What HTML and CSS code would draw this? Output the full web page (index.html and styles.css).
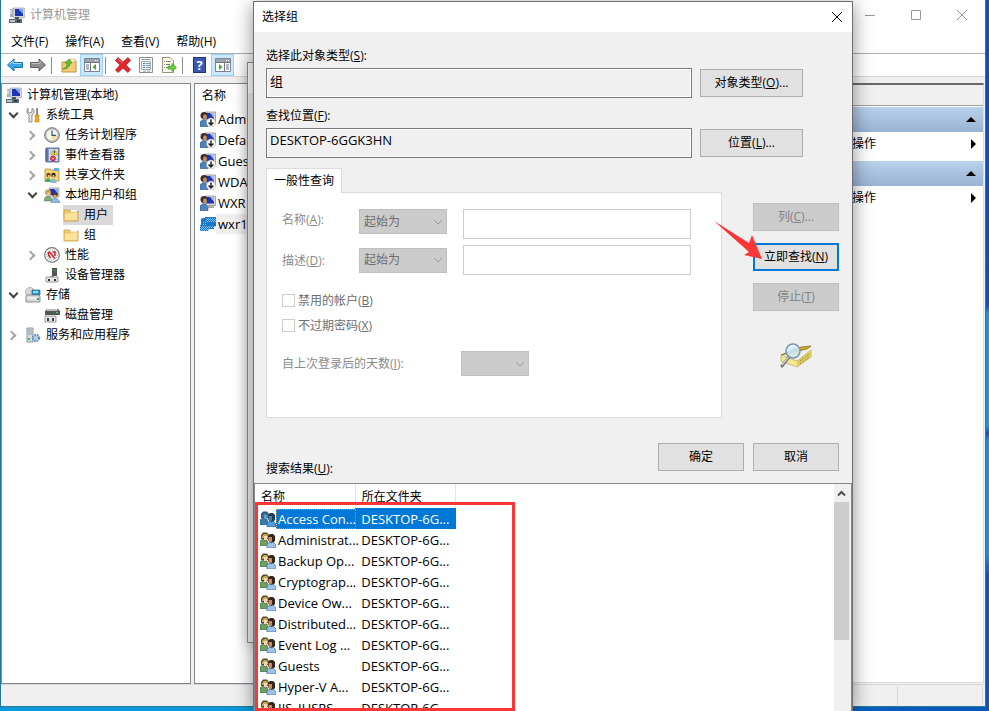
FILE: index.html
```html
<!DOCTYPE html>
<html lang="zh-CN">
<head>
    <meta charset="UTF-8">
    <meta name="viewport" content="width=device-width, initial-scale=1.0">
    <title>计算机管理</title>
    <link rel="stylesheet" href="styles.css">
</head>
<body>

<!-- Shared icons -->
<svg class="sprite" aria-hidden="true">
    <symbol id="i-computer" viewBox="0 0 16 16">
        <path d="M4 1h11l1 1v8l-2 1H5L4 10z" fill="#d5d8de" stroke="#8b8f98" stroke-width=".6"/>
        <path d="M6 2h8v7H6z" fill="#1c35b5"/><path d="M10 2h4v5L10 3z" fill="#7fa4f2"/>
        <path d="M1 2h3v8H1z" fill="#a9afb8"/><path d="M1 4h2M1 6h2" stroke="#fff"/>
        <path d="M0 12h13v4H0z" fill="#5d6b76"/><path d="M1 13h5v2H1z" fill="#b8c4cc"/><path d="M8 13h3v2H8z" fill="#2f3d46"/>
        <path d="M6 10h4v2H6z" fill="#4b5560"/>
    </symbol>
    <symbol id="i-tools" viewBox="0 0 16 16">
        <path d="M3 1v4l2 1 2-1V1l2 2v3L7 8v7H4V8L2 6V3z" fill="#e3e3e3" stroke="#7b7b7b" stroke-width=".8"/>
        <path d="M11 1h2v7h-2z" fill="#8d8d8d"/><path d="M10 8h4v2l-1 1 1 1v3h-4v-3l1-1-1-1z" fill="#f0a91c" stroke="#c47a08" stroke-width=".6"/>
    </symbol>
    <symbol id="i-clock" viewBox="0 0 16 16">
        <circle cx="8" cy="8" r="7.4" fill="#b9b9b9" stroke="#6f6f6f" stroke-width=".8"/>
        <circle cx="8" cy="8" r="5.6" fill="#f7f4e8"/><path d="M8 8h5A5.4 5.4 0 0 1 8 13.4z" fill="#f3dda7"/>
        <path d="M8 3.5V8.3h4" fill="none" stroke="#26507d" stroke-width="1.2"/>
    </symbol>
    <symbol id="i-book" viewBox="0 0 16 16">
        <path d="M2 1h13v14H2z" fill="#7f9fd3" stroke="#40588a" stroke-width=".8"/><path d="M5 2h9v12H5z" fill="#d3e0f4"/>
        <path d="M1 3h3M1 5h3M1 7h3M1 9h3M1 11h3M1 13h3" stroke="#3f4550" stroke-width=".8"/>
        <path d="M6 4h4M6 6h2M6 12h2M12 12h2" stroke="#8aa3cf" stroke-width=".7"/>
        <path d="M10.500 2l3.500 6H7z" fill="#f8d42c" stroke="#b18a00" stroke-width=".5"/><path d="M10.500 4v2M10.500 6.800v.6" stroke="#222"/>
        <circle cx="9" cy="11.500" r="2.800" fill="#d8232b"/><path d="M8 10.500l2 2m0-2l-2 2" stroke="#fff" stroke-width=".8"/>
    </symbol>
    <symbol id="i-folder" viewBox="0 0 16 16">
        <path d="M1 3h5l1 1h8v10H1z" fill="#f1cf73" stroke="#c99b3b" stroke-width=".8"/>
        <path d="M8 3h6v4H8z" fill="#fff"/><path d="M1.500 6H8l1-1h5.500v8.500h-13z" fill="#fbe29a" stroke="#dcb355" stroke-width=".6"/>
    </symbol>
    <symbol id="i-share" viewBox="0 0 16 16">
        <path d="M1 2h5l1 1h8v11H1z" fill="#f5d572" stroke="#b98c32" stroke-width=".8"/><path d="M10 1h5v3h-5z" fill="#6ea9dc"/>
        <circle cx="4.500" cy="8" r="2.200" fill="#7a4b22"/><circle cx="9.500" cy="8" r="2.200" fill="#2b2b2b"/>
        <path d="M4 8h1.800v2H4zM8.500 8h1.800v2H8.500z" fill="#e4b184"/>
        <path d="M1 15c0-5 6-5 6 0z" fill="#4aa86b"/><path d="M6.500 16c0-6 6-6 6 0z" fill="#82b9dd"/>
    </symbol>
    <symbol id="i-users" viewBox="0 0 16 16">
        <path d="M5 1h10v9H5z" fill="#d3d7e0" stroke="#888" stroke-width=".6"/><path d="M6 2h8v6H6z" fill="#1b34b4"/><path d="M10 2h4v5z" fill="#88a8f0"/>
        <circle cx="4" cy="5.500" r="3" fill="#c8a04b"/><circle cx="4.500" cy="7" r="1.700" fill="#f2c79c"/>
        <circle cx="11" cy="8" r="2.500" fill="#5b3a21"/><circle cx="11" cy="9.300" r="1.600" fill="#e0a878"/>
        <path d="M0 14c0-7 8-6 8 0z" fill="#7fae77" stroke="#4a7a48" stroke-width=".5"/><path d="M7 16c0-7 8-6 9 0z" fill="#8db9e4" stroke="#4e7cae" stroke-width=".5"/>
    </symbol>
    <symbol id="i-perf" viewBox="0 0 16 16">
        <circle cx="8" cy="8" r="7.300" fill="#fff" stroke="#777" stroke-width="1.200"/><circle cx="8" cy="8" r="5.200" fill="#f5f5f5" stroke="#777" stroke-width=".7" stroke-dasharray="1 1"/>
        <path d="M4.500 5v3l2 3M5 4.500l6 7M8.500 5H11v4" fill="none" stroke="#cf1f24" stroke-width="1.500"/>
    </symbol>
    <symbol id="i-device" viewBox="0 0 16 16">
        <path d="M8 1h5v8H8z" fill="#555"/><path d="M10 3h1v1h-1z" fill="#4ce04c"/><path d="M6 9h4v2H6z" fill="#888"/>
        <path d="M2 10h12v5H2z" fill="#e4e4e4" stroke="#888" stroke-width=".8"/><path d="M4 12h2v2H4zM10 12h2v2h-2z" fill="#333"/>
    </symbol>
    <symbol id="i-storage" viewBox="0 0 16 16">
        <circle cx="5" cy="5" r="4.500" fill="#d8dde1" stroke="#999" stroke-width=".7"/><circle cx="5" cy="5" r="1.300" fill="#fff" stroke="#999" stroke-width=".5"/>
        <path d="M7 3h8v5H7z" fill="#2c97c9" stroke="#175e80" stroke-width=".6"/><path d="M8 4h5v2H8z" fill="#8edcf5"/>
        <path d="M1 9l1-1h12l1 1v6H1z" fill="#d6d9db" stroke="#777" stroke-width=".8"/><path d="M2 11h10" stroke="#fff"/><path d="M12 11h2v2h-2z" fill="#2fae3a"/>
    </symbol>
    <symbol id="i-disk" viewBox="0 0 16 16">
        <path d="M2 3l1-1h11l2 2v4H1V4z" fill="#555"/><path d="M3 2h10l1 2H2z" fill="#bbb"/><path d="M12 5h2v1h-2z" fill="#4ce04c"/>
        <path d="M1 9h11v6H1z" fill="#e4e4e4" stroke="#888" stroke-width=".8"/><path d="M3 11h2v3H3zM8 11h2v3H8z" fill="#444"/>
    </symbol>
    <symbol id="i-services" viewBox="0 0 16 16">
        <path d="M2 1h6v14H2z" fill="#d8dde2" stroke="#77808a" stroke-width=".8"/><path d="M3 3h4M3 5h4M3 7h4" stroke="#7f8b98" stroke-width=".8"/><path d="M3 11h2v2H3z" fill="#37b54a"/>
        <circle cx="11" cy="11" r="3.200" fill="#c9dff2" stroke="#5b8ab8" stroke-width="2" stroke-dasharray="1.600 1"/><circle cx="11" cy="11" r="1.300" fill="#fff" stroke="#5b8ab8" stroke-width=".6"/>
    </symbol>
    <symbol id="i-user" viewBox="0 0 16 16">
        <path d="M5 1h10.500v9.500H5z" fill="#d5d8de" stroke="#888" stroke-width=".7"/><path d="M6 2h8v6.500H6z" fill="#1c35b5"/><path d="M10 2h4v5z" fill="#9db9f5"/>
        <path d="M8 11h6v2H8z" fill="#aaa"/>
        <circle cx="4" cy="4.500" r="3.500" fill="#3b2e29"/><ellipse cx="5" cy="6" rx="2" ry="2.700" fill="#c68f63"/>
        <path d="M0 15.500V11l3-2.500 3 1 2 3v3z" fill="#4c82bd" stroke="#234f82" stroke-width=".6"/>
    </symbol>
    <symbol id="i-user-off" viewBox="0 0 16 16">
        <use href="#i-user"/>
        <circle cx="11" cy="11.500" r="4.500" fill="#fff" stroke="#999" stroke-width=".6"/><path d="M11 8.500v5M8.600 11.500l2.400 2.500 2.400-2.500" fill="none" stroke="#222" stroke-width="1.500"/>
    </symbol>
    <symbol id="i-user-sel" viewBox="0 0 16 16">
        <path d="M5 1h11v9l-2 1v2H9l-1 2H0v-5l1-2V3l2-1h2z" fill="#1977c8"/>
        <path d="M6 2.500h10M6 4.500h10M0 10.500h15M0 12.500h9M0 14.500h8" stroke="#73b8ee" stroke-dasharray="1 1"/>
        <path d="M7 3.500h9M7 5.500h9M1 11.500h13M1 13.500h7M3 6.500h4M3 8.500h4" stroke="#8cc6f2" stroke-dasharray="1 1"/>
    </symbol>
    <symbol id="i-group" viewBox="0 0 16 16">
        <path d="M1 7V3l2-2.500h4L9 3v4z" fill="#5a4a22"/><path d="M2 4l2-2h3l1 2v2H2z" fill="#c9ac58"/><path d="M4 4h3v4L5.500 9 4 8z" fill="#f5d6b5"/>
        <path d="M0 13.500V9l3-2 2 2 2-1 1 5.500z" fill="#6f9f63" stroke="#3d6638" stroke-width=".7"/>
        <path d="M8 8V4l2-2h3l2 2v5l-2 2h-3z" fill="#35261d"/><path d="M8.500 5H12v4l-1.500 2L8.500 9z" fill="#c58d64"/>
        <path d="M7 16v-4l3-2 1 1 2-1 3 3v3z" fill="#9dc3ea" stroke="#3c689a" stroke-width=".7"/>
    </symbol>
    <symbol id="i-group-sel" viewBox="0 0 16 16">
        <path d="M1 7V3l2-2.500h4L9 3v4z" fill="#235379"/><path d="M2 4l2-2h3l1 2v2H2z" fill="#3d729b"/><path d="M4 4h3v4L5.500 9 4 8z" fill="#6d9dc2"/>
        <path d="M0 13.500V9l3-2 2 2 2-1 1 5.500z" fill="#387ba6" stroke="#1b557f" stroke-width=".7"/>
        <path d="M8 8V4l2-2h3l2 2v5l-2 2h-3z" fill="#1b3d5e"/><path d="M8.500 5H12v4l-1.500 2L8.500 9z" fill="#527da1"/>
        <path d="M7 16v-4l3-2 1 1 2-1 3 3v3z" fill="#4c9bde" stroke="#1463a8" stroke-width=".7"/>
    </symbol>
    <symbol id="i-panel" viewBox="0 0 16 16">
        <path d="M.5 1.500h15v13H.5z" fill="#fff" stroke="#7b8490"/><path d="M1 2h14v3H1z" fill="#9aa3ae"/><path d="M1 5.500h14" stroke="#6c7580"/>
        <path d="M11 3.500h1M13 3.500h1" stroke="#fff"/>
    </symbol>
</svg>

<div class="desktop">
    <main class="window">
        <header class="titlebar">
            <svg class="icon"><use href="#i-computer"/></svg>
            <h1 class="window-title">计算机管理</h1>
            <button class="caption" aria-label="最小化"><svg viewBox="0 0 12 12"><path d="M1 6.500h10"/></svg></button>
            <button class="caption" aria-label="最大化"><svg viewBox="0 0 12 12"><path d="M1.500 1.500h9v9h-9z"/></svg></button>
            <button class="caption" aria-label="关闭"><svg viewBox="0 0 12 12"><path d="M1 1l10 10M11 1L1 11"/></svg></button>
        </header>

        <nav class="menubar">
            <button>文件(F)</button>
            <button>操作(A)</button>
            <button>查看(V)</button>
            <button>帮助(H)</button>
        </nav>

        <div class="toolbar">
            <button aria-label="后退"><svg class="icon" viewBox="0 0 16 16"><path d="M.5 8L7 2v3.500h8.500v5H7V14z" fill="#38a5e6" stroke="#1b6ea8"/><path d="M2.500 7.500L6 4v2.500h8.500" fill="none" stroke="#a4dcfa"/></svg></button>
            <button aria-label="前进"><svg class="icon" viewBox="0 0 16 16"><path d="M15.500 8L9 2v3.500H.5v5H9V14z" fill="#8f8f8f" stroke="#606060"/><path d="M1.500 6.500H10V4" fill="none" stroke="#c0c0c0"/></svg></button>
            <span class="separator"></span>
            <button aria-label="向上"><svg class="icon" viewBox="0 0 16 16"><path d="M1 5h5l1-1h8v11H1z" fill="#f0cd72" stroke="#bd9440"/><path d="M9 2h5v3H9z" fill="#fff4cf" stroke="#cfa851" stroke-width=".6"/><path d="M2 12c3-1 4-3 4-6H4l4-4 3 4H9c0 4-3 6-7 6z" fill="#5cc23c" stroke="#2f8a1c" stroke-width=".6"/></svg></button>
            <button class="pressed" aria-label="显示控制台树"><svg class="icon" viewBox="0 0 16 16"><use href="#i-panel"/><path d="M6.500 6v8M2 8h3M2 10h3M2 12h3" stroke="#6c7580"/><path d="M12 7v6L8.500 10z" fill="#39a935"/></svg></button>
            <span class="separator"></span>
            <button aria-label="删除"><svg class="icon" viewBox="0 0 16 16"><path d="M3 .5L8 5l5-4.500 2.500 3L11 8l4.500 4.500-2.500 3L8 11l-5 4.500L.5 13 5 8 .5 3.500z" fill="#e2262b" stroke="#a8151a" stroke-width=".7"/><path d="M3 2l4.500 4" stroke="#f58a8c"/></svg></button>
            <button aria-label="属性"><svg class="icon" viewBox="0 0 16 16"><path d="M1.500.5h13v15h-13z" fill="#fdfdfd" stroke="#8a8f96"/><path d="M3 2.500h10" stroke="#9ba2aa"/><path d="M3.500 4.500h9v8h-9z" fill="#eef3f8" stroke="#a5adb6"/><path d="M5 6.500h2M5 8.500h2M5 10.500h2" stroke="#2f8ad0"/><path d="M8 6.500h4M8 8.500h4M8 10.500h4M5 14h3M9 14h3" stroke="#8f98a1"/></svg></button>
            <button aria-label="导出列表"><svg class="icon" viewBox="0 0 16 16"><path d="M1.500.5H9L12.500 4v11.500h-11z" fill="#fffbea" stroke="#95907a"/><path d="M3 4.500h1M3 7.500h1M3 10.500h1M5 4.500h5M5 7.500h4M5 10.500h3" stroke="#77808a"/><path d="M7 9h4V6.500l4.500 4-4.500 4V12H7z" fill="#69cf46" stroke="#3d9a24" stroke-width=".7"/></svg></button>
            <span class="separator"></span>
            <button class="help" aria-label="帮助"><span>?</span></button>
            <button class="pressed" aria-label="显示操作窗格"><svg class="icon" viewBox="0 0 16 16"><use href="#i-panel"/><path d="M9.500 6v8M11 8h3M11 10h3M11 12h3" stroke="#6c7580"/><path d="M4 7v6l3.500-3z" fill="#39a935"/></svg></button>
        </div>

        <div class="panes">
            <section class="tree">
                <ul>
                    <li><a href="#" class="node"><svg class="icon"><use href="#i-computer"/></svg><span>计算机管理(本地)</span></a></li>
                    <li>
                        <a href="#" class="node"><i class="chevron open"></i><svg class="icon"><use href="#i-tools"/></svg><span>系统工具</span></a>
                        <ul>
                            <li><a href="#" class="node"><i class="chevron"></i><svg class="icon"><use href="#i-clock"/></svg><span>任务计划程序</span></a></li>
                            <li><a href="#" class="node"><i class="chevron"></i><svg class="icon"><use href="#i-book"/></svg><span>事件查看器</span></a></li>
                            <li><a href="#" class="node"><i class="chevron"></i><svg class="icon"><use href="#i-share"/></svg><span>共享文件夹</span></a></li>
                            <li>
                                <a href="#" class="node"><i class="chevron open"></i><svg class="icon"><use href="#i-users"/></svg><span>本地用户和组</span></a>
                                <ul>
                                    <li><a href="#" class="node leaf selected"><svg class="icon"><use href="#i-folder"/></svg><span>用户</span></a></li>
                                    <li><a href="#" class="node leaf"><svg class="icon"><use href="#i-folder"/></svg><span>组</span></a></li>
                                </ul>
                            </li>
                            <li><a href="#" class="node"><i class="chevron"></i><svg class="icon"><use href="#i-perf"/></svg><span>性能</span></a></li>
                            <li><a href="#" class="node leaf"><svg class="icon"><use href="#i-device"/></svg><span>设备管理器</span></a></li>
                        </ul>
                    </li>
                    <li>
                        <a href="#" class="node"><i class="chevron open"></i><svg class="icon"><use href="#i-storage"/></svg><span>存储</span></a>
                        <ul>
                            <li><a href="#" class="node leaf"><svg class="icon"><use href="#i-disk"/></svg><span>磁盘管理</span></a></li>
                        </ul>
                    </li>
                    <li><a href="#" class="node"><i class="chevron"></i><svg class="icon"><use href="#i-services"/></svg><span>服务和应用程序</span></a></li>
                </ul>
            </section>

            <section class="users">
                <table>
                    <thead><tr><th>名称</th></tr></thead>
                    <tbody>
                        <tr><td><svg class="icon"><use href="#i-user-off"/></svg><span>Admi</span></td></tr>
                        <tr><td><svg class="icon"><use href="#i-user-off"/></svg><span>Defau</span></td></tr>
                        <tr><td><svg class="icon"><use href="#i-user-off"/></svg><span>Guest</span></td></tr>
                        <tr><td><svg class="icon"><use href="#i-user-off"/></svg><span>WDA</span></td></tr>
                        <tr><td><svg class="icon"><use href="#i-user"/></svg><span>WXR</span></td></tr>
                        <tr class="selected"><td><svg class="icon"><use href="#i-user-sel"/></svg><span>wxr1</span></td></tr>
                    </tbody>
                </table>
            </section>

            <aside class="actions">
                <div class="actions-head"></div>
                <div class="actions-group"><i class="up"></i></div>
                <button class="actions-item">操作<i class="right"></i></button>
                <div class="actions-group"><i class="up"></i></div>
                <button class="actions-item">操作<i class="right"></i></button>
            </aside>
        </div>

        <footer class="statusbar"><span></span><span></span></footer>
    </main>

    <div class="back-dialog"></div>

    <div class="dialog" role="dialog" aria-labelledby="dialogTitle">
        <header class="dialog-title">
            <h2 id="dialogTitle">选择组</h2>
            <button class="close" aria-label="关闭"><svg viewBox="0 0 12 12"><path d="M1 1l10 10M11 1L1 11"/></svg></button>
        </header>

        <form class="dialog-form">
            <div class="scope">
                <label for="objectType">选择此对象类型(<u>S</u>):</label>
                <input type="text" id="objectType" value="组" readonly>
                <button type="button">对象类型(<u>O</u>)...</button>
                <label for="location" class="second">查找位置(<u>F</u>):</label>
                <input type="text" id="location" value="DESKTOP-6GGK3HN" readonly>
                <button type="button">位置(<u>L</u>)...</button>
            </div>

            <div class="query">
                <div class="tabs">
                    <button type="button" class="tab">一般性查询</button>
                    <div class="tab-panel">
                        <div class="filter">
                            <label for="nameText">名称(<u>A</u>):</label>
                            <select aria-label="名称条件" disabled><option>起始为</option></select>
                            <input type="text" id="nameText" disabled>
                        </div>
                        <div class="filter centered">
                            <label for="descText">描述(<u>D</u>):</label>
                            <select aria-label="描述条件" disabled><option>起始为</option></select>
                            <input type="text" id="descText" disabled>
                        </div>
                        <div class="checks">
                            <label><input type="checkbox" disabled>禁用的帐户(<u>B</u>)</label>
                            <label><input type="checkbox" disabled>不过期密码(<u>X</u>)</label>
                        </div>
                        <div class="days">
                            <label for="days">自上次登录后的天数(<u>I</u>):</label>
                            <select id="days" disabled><option></option></select>
                        </div>
                    </div>
                </div>
                <div class="side">
                    <button type="button" disabled>列(<u>C</u>)...</button>
                    <button type="button" class="default">立即查找(<u>N</u>)</button>
                    <button type="button" disabled>停止(<u>T</u>)</button>
                    <svg class="find-icon" viewBox="0 0 32 26">
                        <path d="M1 12L21 4l10-1-4 3z" fill="#d9a528" stroke="#7a6420" stroke-width=".7"/>
                        <path d="M1 12l16 6 14-11v7L17 24 1 18z" fill="#f3e98f" stroke="#b0a558" stroke-width=".7"/>
                        <path d="M17 18v6L31 14V7z" fill="#dccd62"/><path d="M20 18l9-7M20 21l9-7" stroke="#8d8238" stroke-width=".8" stroke-dasharray="2 1"/>
                        <path d="M9 14l-7 9" stroke="#777" stroke-width="3" stroke-linecap="round"/><path d="M8.500 14l-6.500 8" stroke="#d5d5d5" stroke-width="1.200"/>
                        <circle cx="13" cy="8" r="7" fill="#c9e6f7" fill-opacity=".88" stroke="#7795ab" stroke-width="1.500"/>
                        <path d="M8 10c4 3 8 2 11-2-1 5-9 7-11 2z" fill="#e9e9a0"/><path d="M9 6c1-3 4-4 6-3" fill="none" stroke="#fff" stroke-width="1.500"/>
                    </svg>
                </div>
            </div>

            <div class="confirm">
                <button type="button">确定</button>
                <button type="button">取消</button>
            </div>
            <h3 class="results-label">搜索结果(<u>U</u>):</h3>
        </form>

        <div class="results">
            <table>
                <thead>
                    <tr><th>名称</th><th>所在文件夹</th></tr>
                </thead>
                <tbody>
                    <tr class="selected"><td><svg class="icon"><use href="#i-group-sel"/></svg><span>Access Con...</span></td><td>DESKTOP-6G...</td></tr>
                    <tr><td><svg class="icon"><use href="#i-group"/></svg><span>Administrat...</span></td><td>DESKTOP-6G...</td></tr>
                    <tr><td><svg class="icon"><use href="#i-group"/></svg><span>Backup Op...</span></td><td>DESKTOP-6G...</td></tr>
                    <tr><td><svg class="icon"><use href="#i-group"/></svg><span>Cryptograp...</span></td><td>DESKTOP-6G...</td></tr>
                    <tr><td><svg class="icon"><use href="#i-group"/></svg><span>Device Ow...</span></td><td>DESKTOP-6G...</td></tr>
                    <tr><td><svg class="icon"><use href="#i-group"/></svg><span>Distributed...</span></td><td>DESKTOP-6G...</td></tr>
                    <tr><td><svg class="icon"><use href="#i-group"/></svg><span>Event Log ...</span></td><td>DESKTOP-6G...</td></tr>
                    <tr><td><svg class="icon"><use href="#i-group"/></svg><span>Guests</span></td><td>DESKTOP-6G...</td></tr>
                    <tr><td><svg class="icon"><use href="#i-group"/></svg><span>Hyper-V A...</span></td><td>DESKTOP-6G...</td></tr>
                    <tr><td><svg class="icon"><use href="#i-group"/></svg><span>IIS_IUSRS</span></td><td>DESKTOP-6G...</td></tr>
                </tbody>
            </table>
            <div class="scrollbar">
                <svg class="scroll-up" viewBox="0 0 15 17"><path d="M4 11l3.500-3.500L11 11" fill="none" stroke="#505050" stroke-width="2"/></svg>
                <div class="thumb"></div>
            </div>
            <div class="highlight"></div>
        </div>

        <svg class="arrow" viewBox="0 0 48 39"><path d="M0 0l35 22 3-8 10 24-18-4 5-3z" fill="#fb3636"/></svg>
    </div>
</div>

</body>
</html>
```
FILE: styles.css
```css
*, *::before {
    box-sizing: border-box;
}

body {
    margin: 0;
    font-family: "Open Sans", "Noto Sans CJK SC", sans-serif;
    font-size: 12px;
    line-height: 20px;
    color: #000;
}

h1, h2, h3, ul {
    margin: 0;
    padding: 0;
    font-size: 12px;
    font-weight: normal;
    list-style: none;
}

button, input, select {
    font: inherit;
    color: inherit;
    border-radius: 0;
    margin: 0;
    padding: 0;
}

button {
    border: 0;
    background: none;
}

a {
    color: inherit;
    text-decoration: none;
}

table {
    border-collapse: collapse;
}

th {
    font-weight: normal;
    text-align: left;
}

th, td {
    padding: 0;
}

.sprite {
    display: none;
}

.icon {
    display: block;
    flex: none;
    width: 16px;
    height: 16px;
}

.desktop {
    position: relative;
    display: flex;
    height: 100vh;
    overflow: hidden;
    padding: 0 4px 5px 1px;
    background:
        linear-gradient(90deg, #0a9ad8 30%, #0a58b8 95%) no-repeat bottom / 100% 5px,
        linear-gradient(#0a4fbb, #0a50c4 43%, #1c92da 44%, #1c92da 60%, #0a53c0 61%, #1c8fdc 62%, #1c8fdc 78%, #0a55bd 81%);
}

/* Main window */
.window {
    flex: 1;
    display: flex;
    flex-direction: column;
    background: #f0f0f0;
    box-shadow: 0 0 0 1px #28789e;
}

.titlebar {
    display: flex;
    align-items: center;
    height: 30px;
    padding-left: 8px;
    background: #fff;
    color: #999;
}

.window-title {
    flex: 1;
    padding-left: 5px;
}

.caption {
    width: 46px;
    height: 30px;
}

.caption svg, .close svg {
    display: block;
    width: 12px;
    height: 12px;
    margin: auto;
    fill: none;
    stroke: #999;
}

.menubar {
    display: flex;
    gap: 17px;
    height: 24px;
    padding: 0 10px;
    border-bottom: 1px solid #a9adb5;
    background: #fff;
}

.toolbar {
    display: flex;
    height: 23px;
    padding-left: 2px;
    border-bottom: 1px solid #d7d7d7;
    background: #fff;
}

.toolbar button {
    display: flex;
    align-items: center;
    justify-content: center;
    width: 23px;
}

.toolbar .pressed {
    background: #cce8ff;
    border: 1px solid #99d1ff;
}

.toolbar .help span {
    width: 13px;
    height: 16px;
    border: 1px solid #20347a;
    background: #3a59b5;
    color: #fff;
    font-size: 13px;
    font-weight: bold;
    line-height: 14px;
}

.separator {
    width: 8px;
    padding: 3px 0;
}

.separator::before {
    content: "";
    display: block;
    width: 1px;
    height: 17px;
    margin-left: 2px;
    background: #8c8c8c;
}

.panes {
    flex: 1;
    display: flex;
    padding-top: 6px;
    min-height: 0;
}

.tree {
    width: 190px;
    padding: 1px 0 0 4px;
    border: 1px solid #828790;
    background: #fff;
}

.tree ul ul {
    padding-left: 19px;
}

.node {
    display: flex;
    align-items: center;
    width: max-content;
    height: 20px;
}

.node span {
    padding: 0 5px;
}

.leaf {
    margin-left: 19px;
}

.leaf.selected {
    background: #d9d9d9;
}

.chevron {
    width: 19px;
}

.chevron::before {
    content: "";
    display: block;
    width: 7px;
    height: 7px;
    margin-left: 2px;
    border: solid #a6a6a6;
    border-width: 2px 2px 0 0;
    transform: rotate(45deg);
}

.chevron.open::before {
    border-color: #404040;
    margin-bottom: 4px;
    margin-left: 4px;
    transform: rotate(135deg);
}

.users {
    flex: 1;
    margin-left: 3px;
    border: 1px solid #828790;
    background: #fff;
    font-size: 13px;
}

.users th {
    height: 24px;
    padding-left: 7px;
    font-size: 12px;
}

.users td {
    display: flex;
    align-items: center;
    height: 21px;
    padding-left: 5px;
}

.users td span {
    padding: 0 2px;
}

.users .selected span {
    background: #efefef;
}

/* Actions pane */
.actions {
    width: 141px;
    margin: 0 1px 1px 2px;
    border-top: 2px solid #696969;
    border-right: 1px solid #dcdcdc;
    border-bottom: 1px solid #dcdcdc;
    background: #fff;
}

.actions-head {
    height: 21px;
    margin-bottom: 1px;
    border-bottom: 1px solid #a0a0a0;
    background: #f0f0f0;
}

.actions-group {
    display: flex;
    align-items: center;
    justify-content: flex-end;
    height: 25px;
    padding-right: 7px;
    background: linear-gradient(#b9d1ea, #98b3d3);
}

.actions-item {
    display: flex;
    align-items: center;
    justify-content: space-between;
    width: 100%;
    height: 29px;
    padding: 0 7px 5px 9px;
}

.up {
    border: solid transparent;
    border-width: 0 5px 5px;
    border-bottom-color: #000;
}

.right {
    border: solid transparent;
    border-width: 5px 0 5px 5px;
    border-left-color: #000;
}

.statusbar {
    display: flex;
    justify-content: flex-end;
    height: 22px;
    padding: 1px 2px 1px 0;
    border-top: 1px solid #d7d7d7;
}

.statusbar span {
    width: 85px;
    border-right: 1px solid #d7d7d7;
}

/* Dialogs lie over the main window */
.back-dialog {
    position: absolute;
    top: 62px;
    bottom: 68px;
    left: 247px;
    width: 300px;
    border: 1px solid #8f8f8f;
    background: linear-gradient(#fff 30px, #f0f0f0 30px);
    box-shadow: 0 2px 12px rgba(0, 0, 0, 0.25);
}

.dialog {
    position: absolute;
    top: 1px;
    bottom: 0;
    left: 253px;
    right: 136px;
    display: flex;
    flex-direction: column;
    border: 1px solid #707070;
    border-bottom: 0;
    background: #f0f0f0;
    box-shadow: 0 4px 18px rgba(0, 0, 0, 0.45);
}

.dialog-title {
    display: flex;
    align-items: center;
    justify-content: space-between;
    height: 30px;
    padding-left: 8px;
    background: #fff;
}

.close {
    width: 30px;
}

.close svg {
    stroke: #000;
}

.dialog-form {
    padding: 12px 13px 0 12px;
}

.dialog-form button {
    height: 28px;
    border: 1px solid #adadad;
    background: #e1e1e1;
}

.dialog-form button:disabled {
    border-color: #bfbfbf;
    background: #ccc;
    color: #838383;
}

.dialog-form .default {
    border: 2px solid #0078d7;
}

.scope {
    display: grid;
    grid-template-columns: 1fr 103px;
    column-gap: 8px;
    align-items: center;
    padding-right: 36px;
}

.scope label {
    grid-column: 1 / -1;
    height: 24px;
    padding-top: 2px;
}

.scope .second {
    height: 30px;
    padding-top: 8px;
}

.scope input {
    width: 100%;
    height: 30px;
    padding: 0 3px 6px;
    border: 1px solid #7a7a7a;
    outline: 1px solid #fff;
    outline-offset: -2px;
    background: #f0f0f0;
    font-size: 13px;
}

.query {
    display: flex;
    gap: 31px;
    padding-top: 10px;
}

.tabs {
    flex: 1;
}

.dialog-form .tab {
    display: block;
    position: relative;
    width: 76px;
    height: 25px;
    margin-bottom: -1px;
    border: 1px solid #dcdcdc;
    border-bottom: 0;
    background: #fff;
}

.tab-panel {
    padding: 16px 30px 41px 15px;
    border: 1px solid #dcdcdc;
    background: #fff;
    color: #8a8a8a;
}

.filter {
    display: grid;
    grid-template-columns: 61px 88px 1fr;
    gap: 16px;
    align-items: start;
    margin-bottom: 6px;
}

.filter label {
    padding-top: 1px;
}

.filter.centered {
    align-items: center;
}

.filter input {
    width: 100%;
    height: 30px;
    border: 1px solid #ccc;
    background: #fff;
}

select {
    appearance: none;
    height: 25px;
    padding: 0 4px;
    border: 1px solid #bfbfbf;
    background: #ccc url("data:image/svg+xml,%3Csvg xmlns='http://www.w3.org/2000/svg' viewBox='0 0 10 6'%3E%3Cpath d='M1 1l4 4 4-4' fill='none' stroke='%23999'/%3E%3C/svg%3E") no-repeat right 3px center / 10px 6px;
    color: #6d6d6d;
    opacity: 1;
}

.checks {
    padding-top: 7px;
    color: #6d6d6d;
}

.checks label {
    display: flex;
    align-items: center;
    height: 25px;
}

.checks input {
    appearance: none;
    width: 13px;
    height: 13px;
    margin-right: 3px;
    border: 1px solid #ccc;
    background: #fff;
}

.days {
    display: flex;
    align-items: center;
    padding-top: 13px;
}

.days label {
    width: 179px;
}

.days select {
    width: 68px;
}

.side {
    display: flex;
    flex-direction: column;
    align-items: center;
    gap: 12px;
    width: 86px;
    padding-top: 35px;
}

.side button {
    width: 100%;
}

.find-icon {
    width: 32px;
    height: 26px;
    margin-top: 20px;
}

.confirm {
    display: flex;
    justify-content: flex-end;
    gap: 9px;
    padding-top: 25px;
}

.confirm button {
    width: 86px;
}

.results-label {
    width: max-content;
    margin-top: -12px;
    padding-bottom: 4px;
}

/* Search results */
.results {
    position: relative;
    flex: 1;
    display: flex;
    justify-content: space-between;
    min-height: 0;
    overflow: hidden;
    border: 1px solid #828790;
    border-bottom: 0;
    background: #fff;
    font-size: 13px;
}

.results table {
    align-self: flex-start;
    width: 201px;
    table-layout: fixed;
}

.results th {
    height: 24px;
    padding: 2px 6px 0;
    border-right: 1px solid #e5e5e5;
    font-size: 12px;
}

.results tr {
    height: 21px;
}

.results td:first-child {
    display: flex;
    align-items: center;
    height: 21px;
    padding-left: 5px;
}

.results td span {
    flex: 1;
    padding-left: 2px;
    white-space: nowrap;
}

.results td + td {
    padding-left: 6px;
}

.results .selected span, .results .selected td + td {
    background: #0078d7;
    color: #fff;
}

.results .selected span {
    outline: 1px dotted #e08b38;
    outline-offset: -1px;
}

.scrollbar {
    width: 17px;
    padding-right: 2px;
    background: #f0f0f0;
}

.scroll-up {
    display: block;
    width: 15px;
    height: 18px;
}

.thumb {
    height: 138px;
    background: #cdcdcd;
}

/* Callouts */
.highlight {
    position: absolute;
    top: 18px;
    bottom: 0;
    left: 0;
    width: 260px;
    border: 3px solid #fb3636;
}

.arrow {
    position: absolute;
    top: 219px;
    left: 460px;
    width: 48px;
    height: 39px;
}
```
